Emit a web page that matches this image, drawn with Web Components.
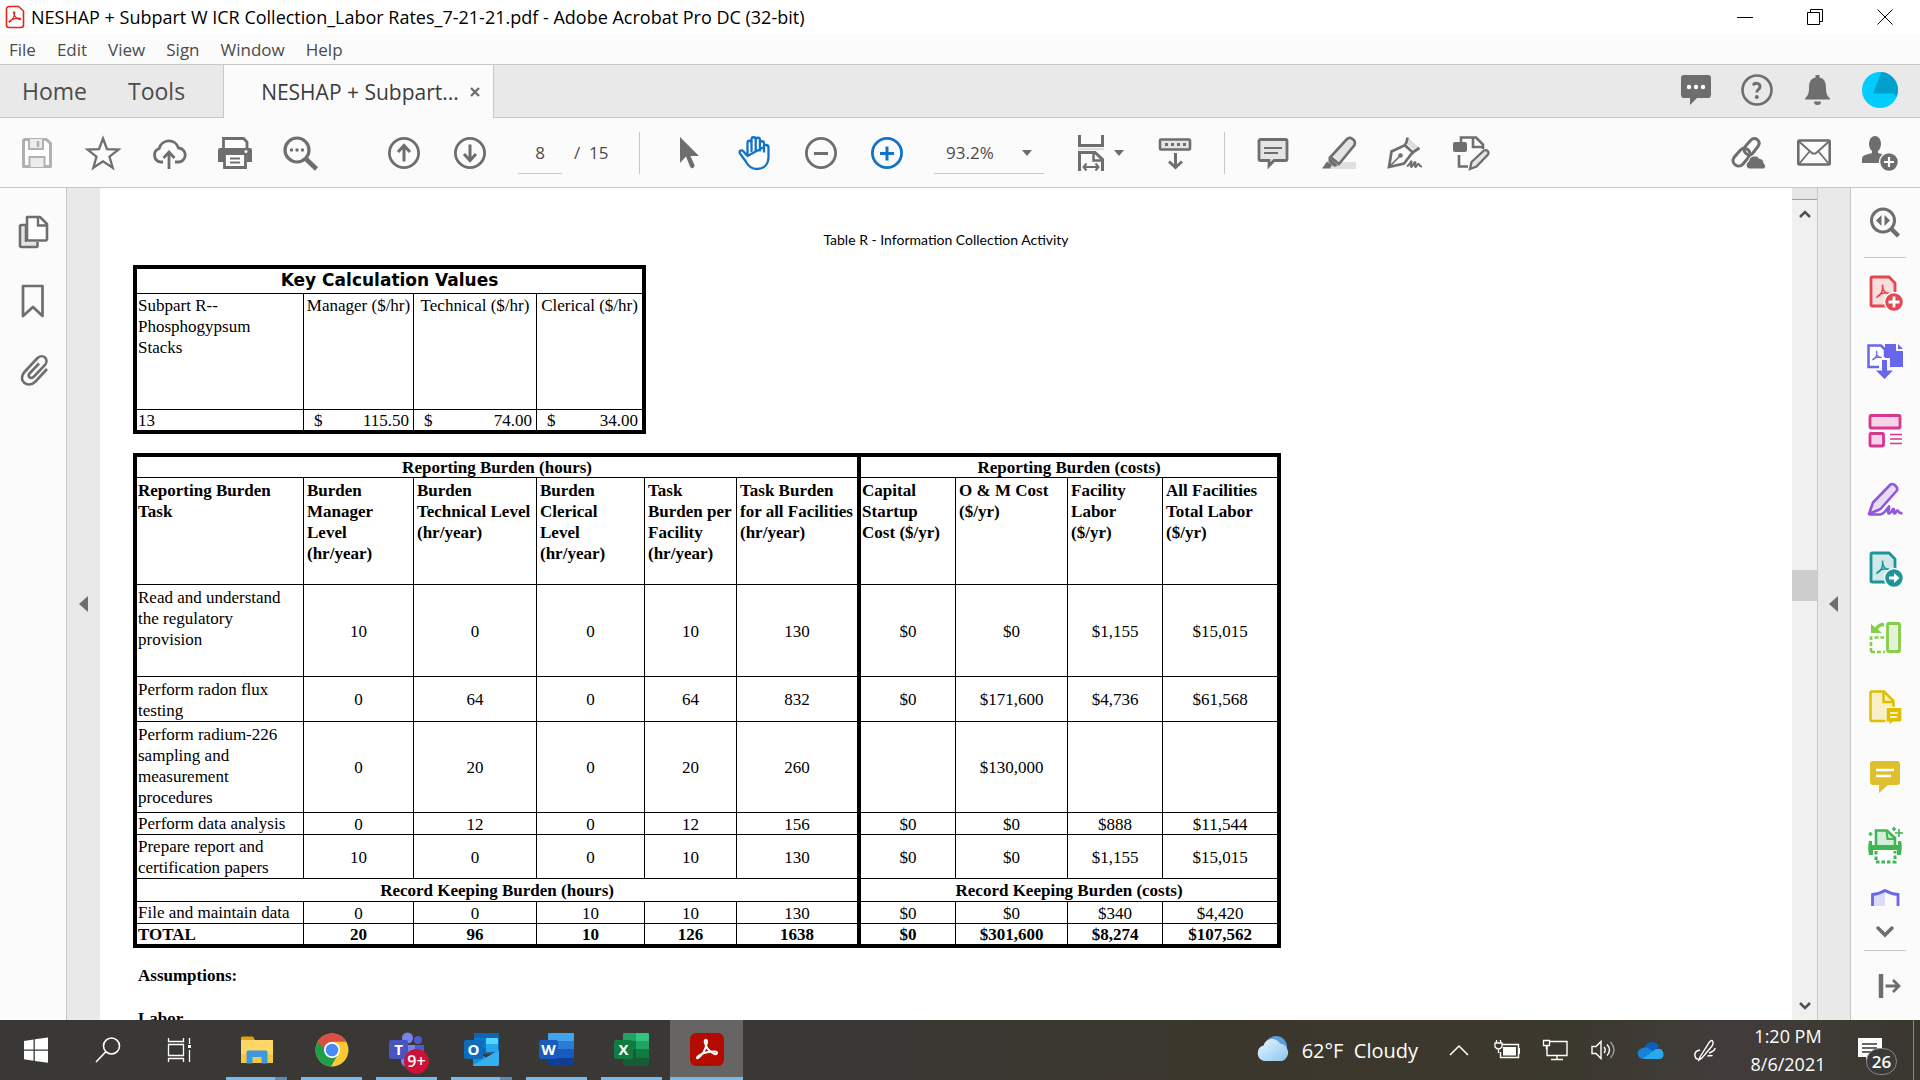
<!DOCTYPE html>
<html lang="en">
<head>
<meta charset="utf-8">
<title>NESHAP + Subpart W ICR Collection_Labor Rates_7-21-21.pdf - Adobe Acrobat Pro DC (32-bit)</title>
<style>
    html, body {
        margin: 0;
        height: 100%;
        overflow: hidden;
    }
    body {
        font-family: "Open Sans", "Noto Sans", sans-serif;
        font-size: 17px;
        color: #4b4b4b;
    }
</style>
</head>
<body>
<acrobat-app></acrobat-app>

<script>
/** Icons, all on a 36x36 grid unless a viewBox is given */
const icons = {
    pdfFile: { box: "0 0 20 24", svg: `<path d="M4 1.500h9.500l5 4.500v14a2.500 2.500 0 0 1-2.500 2.500H4A2.500 2.500 0 0 1 1.500 20V4A2.500 2.500 0 0 1 4 1.500z" fill="#fff" stroke="#e2231a" stroke-width="1.600"/><path d="M4.500 17c2-1 4.500-5 5.200-9 .2-1.500-1.500-1.500-1 .3.800 3 3.300 5.200 5.800 6.200 1.500.3 1.500-1.300-.2-1.400-3 0-6.500.8-9 2.400-1.500 1-1.500 2-.8 1.500z" fill="none" stroke="#e2231a" stroke-width="1.200"/>` },
    minimize: { box: "0 0 16 16", svg: `<path d="M0 8.500h16" stroke="#000"/>` },
    restore: { box: "0 0 16 16", svg: `<path d="M.5 3.500h12v12H.5zM3.500 3.500V.5h12v12h-3" fill="none" stroke="#000"/>` },
    close: { box: "0 0 16 16", svg: `<path d="M.5.5l15 15M15.500.5l-15 15" stroke="#000"/>` },
    smallClose: { box: "0 0 10 10", svg: `<path d="M1 1l8 8M9 1L1 9" stroke="#6e6e6e" stroke-width="2.400"/>` },
    caret: { box: "0 0 10 6", svg: `<path d="M0 0h10L5 6z" fill="#6e6e6e"/>` },
    collapse: { box: "0 0 9 16", svg: `<path d="M9 0v16L0 8z" fill="#6e6e6e"/>` },
    up: { box: "0 0 12 10", svg: `<path d="M1 8l5-5 5 5" fill="none" stroke="#505050" stroke-width="2.500"/>` },
    down: { box: "0 0 12 10", svg: `<path d="M1 2l5 5 5-5" fill="none" stroke="#505050" stroke-width="2.500"/>` },

    chat: { svg: `<path d="M5 3h24a3 3 0 0 1 3 3v17a3 3 0 0 1-3 3H18l-7 7v-7H5a3 3 0 0 1-3-3V6a3 3 0 0 1 3-3z" fill="#6e6e6e"/><g fill="#fff"><circle cx="10" cy="15" r="2.200"/><circle cx="17" cy="15" r="2.200"/><circle cx="24" cy="15" r="2.200"/></g>` },
    help: { svg: `<circle cx="18" cy="18" r="14.500" fill="none" stroke="#6e6e6e" stroke-width="2.600"/><path d="M14.500 13.500c.5-3 6.500-3 6.500 1 0 3-3.200 3-3.200 6" fill="none" stroke="#6e6e6e" stroke-width="3"/><circle cx="17.800" cy="25" r="2" fill="#6e6e6e"/>` },
    bell: { svg: `<path d="M16.500 3h4v2.500c5 1 6.500 5 6.500 10 0 6 1 8 4 11v1H6v-1c3-3 4-5 4-11 0-5 1.500-9 6.500-10z" fill="#6e6e6e"/><path d="M15 29.500h7a3.500 3.500 0 0 1-7 0z" fill="#6e6e6e"/>` },
    avatar: { svg: `<circle cx="18" cy="18" r="18" fill="#00ccff"/><path d="M19.500 0A18 18 0 0 1 34.500 25L32 21.500H11z" fill="#00a0cc"/>` },

    save: { svg: `<path d="M5.500 4.500h22l4 4v23h-27v-26z" fill="#fff" stroke="#b1b1b1" stroke-width="3" stroke-linejoin="round"/><path d="M10 4v10h14V4" fill="#ececec" stroke="#b1b1b1" stroke-width="2"/><path d="M19 6v6" stroke="#b1b1b1" stroke-width="2.500"/><path d="M10.500 32V22h15v10" fill="#ececec" stroke="#b1b1b1" stroke-width="2"/>` },
    star: { svg: `<path d="M18 3.500l4 10.700 11.500.4-9 7.100 3.200 11L18 26.300l-9.700 6.400 3.200-11-9-7.100 11.500-.4z" fill="none" stroke="#6e6e6e" stroke-width="2.300"/>` },
    cloud: { svg: `<path d="M12 27H9.500a7 7 0 0 1-1.300-13.500 10 10 0 0 1 19.300-.5A7 7 0 0 1 27 27h-3" fill="none" stroke="#6e6e6e" stroke-width="2.800"/><path d="M18 34V17M12.500 23l5.500-6 5.500 6" fill="none" stroke="#6e6e6e" stroke-width="2.800"/>` },
    print: { svg: `<path d="M6.500 14V3.500h20L30 7v7" fill="#fff" stroke="#6e6e6e" stroke-width="2.800"/><path d="M3 13h30a2 2 0 0 1 2 2v12h-5v-6H7v6H1V15a2 2 0 0 1 2-2z" fill="#6e6e6e"/><circle cx="29" cy="16.500" r="1.500" fill="#fff"/><path d="M7.500 20v12.500h21V20" fill="#fff" stroke="#6e6e6e" stroke-width="2.800"/><path d="M13 23.500h10M13 27.500h10" stroke="#6e6e6e" stroke-width="1.800"/>` },
    find: { svg: `<circle cx="14" cy="15" r="12" fill="none" stroke="#6e6e6e" stroke-width="3.200"/><path d="M23 24l10.500 10" stroke="#6e6e6e" stroke-width="4.500"/><g fill="#6e6e6e"><circle cx="8.500" cy="15" r="1.700"/><circle cx="14" cy="15" r="1.700"/><circle cx="19.500" cy="15" r="1.700"/></g>` },
    prev: { svg: `<circle cx="18" cy="18" r="14.600" fill="none" stroke="#6e6e6e" stroke-width="2.800"/><path d="M18 26.500V11M12 17l6-6.500 6 6.500" fill="none" stroke="#6e6e6e" stroke-width="3"/>` },
    next: { svg: `<circle cx="18" cy="18" r="14.600" fill="none" stroke="#6e6e6e" stroke-width="2.800"/><path d="M18 9.500V25M12 19l6 6.500 6-6.500" fill="none" stroke="#6e6e6e" stroke-width="3"/>` },
    pointer: { svg: `<path d="M9 2v26l6-6.500 4 10q1 2.500 3 1.500t1.500-3L19.500 21H28z" fill="#6e6e6e"/>` },
    hand: { svg: `<path d="M10.500 21V8c0-3 4-3 4 0v8V4.500c0-3 4.200-3 4.200 0V16 5c0-3 4.200-3 4.200 0v11.500 M22.900 8.500c0-3 4.100-3 4.100 0v9 M27 12c0-3 4.500-2.500 4.500.5v9C31.500 29 27.500 34 20 34c-6 0-9-3-11.500-8L3 18.500c-1.500-3 1.500-4 3.500-2L10.500 21z" fill="#fff" stroke="#1473c8" stroke-width="2.300" stroke-linejoin="round"/>` },
    minus: { svg: `<circle cx="18" cy="18" r="14.600" fill="none" stroke="#6e6e6e" stroke-width="2.800"/><path d="M11 18.500h14" stroke="#6e6e6e" stroke-width="3"/>` },
    plus: { svg: `<circle cx="18" cy="18" r="14.600" fill="none" stroke="#1473c8" stroke-width="2.800"/><path d="M11 18.500h14M18 11.500v14" stroke="#1473c8" stroke-width="3"/>` },
    fit: { svg: `<path d="M6.500 0v10.500h23V0" fill="none" stroke="#6e6e6e" stroke-width="3"/><path d="M5 14h26" stroke="#ddd" stroke-width="2.500"/><path d="M6.500 36V17.500H22l7.500 7V36" fill="none" stroke="#6e6e6e" stroke-width="3"/><path d="M20.500 17v8.500h9" fill="none" stroke="#6e6e6e" stroke-width="2.500"/><path d="M12 32h12M13.500 28.500L10.500 32l3 3.500M22.500 28.500l3 3.500-3 3.500" fill="none" stroke="#6e6e6e" stroke-width="2"/>` },
    scrollMode: { svg: `<rect x="3" y="4.500" width="30" height="10" rx="1" fill="#e4e4e4" stroke="#6e6e6e" stroke-width="2.600"/><path d="M8 9.500h21" stroke="#6e6e6e" stroke-width="3" stroke-dasharray="3 3"/><path d="M18.500 18v15M12 26.500l6.500 6 6.500-6" fill="none" stroke="#6e6e6e" stroke-width="3"/>` },
    comment: { svg: `<path d="M5.500 4.500h25a1.500 1.500 0 0 1 1.500 1.500v18a1.500 1.500 0 0 1-1.500 1.500H19L14 31v-5.500H5.500A1.500 1.500 0 0 1 4 24V6a1.500 1.500 0 0 1 1.500-1.500z" fill="#e4e4e4" stroke="#6e6e6e" stroke-width="2.800"/><path d="M9 13h18M9 18h14" stroke="#6e6e6e" stroke-width="1.800"/>` },
    highlight: { svg: `<path d="M13 27h22v7H8z" fill="#e0e0e0"/><path d="M9.500 22L26 4c3-3 9.500 1 7.500 6L18 29z" fill="#e4e4e4" stroke="#6e6e6e" stroke-width="2.600"/><path d="M7.500 21.500l9.500 9-3.500 1.500-6-5zM6 26.500l5 3.500-2 3.500H1z" fill="#6e6e6e"/>` },
    sign: { svg: `<path d="M22 3l10 10-5 2-7-6z" fill="#ddd"/><path d="M20.500 2.500c-1 4 .5 3.500-3 8L4.500 16.500 2 32l15-3.500 8.500-11 7-4.500M17 9.500l10 9" fill="none" stroke="#6e6e6e" stroke-width="2.700"/><path d="M3 31l10-10" stroke="#6e6e6e" stroke-width="1.700"/><circle cx="13.500" cy="20.500" r="2.300" fill="#6e6e6e"/><path d="M20 31.500c3-2 4-6 4.500-5s-1.500 5.500 0 5.500 2-5 3.500-5-1 5 .5 5 1.500-3.500 3-3 .5 3 3.500 2.500" fill="none" stroke="#6e6e6e" stroke-width="2"/>` },
    editDoc: { svg: `<path d="M8 8V2.500h15l7 7V14" fill="none" stroke="#6e6e6e" stroke-width="2.600"/><path d="M20 3v9h10" fill="none" stroke="#6e6e6e" stroke-width="2.600"/><rect y="7" width="14" height="10" rx="2" fill="#6e6e6e"/><path d="M6 20v11.500h9" fill="none" stroke="#6e6e6e" stroke-width="2.600"/><path d="M17 34l1.500-7L31 15.500c3-1.500 5.500 1.500 4 4L23.500 31.500z" fill="#e4e4e4" stroke="#6e6e6e" stroke-width="2.300"/>` },
    link: { svg: `<g fill="none" stroke="#6e6e6e" stroke-width="3"><path d="M16 18.500c-3.500-3.500-2-6 0-8l5-5.500c4-4 10.500 1 7 6.500l-5 6.500c-2 2.500-5 2.500-7 .5"/><path d="M17 14c4 2.500 3.500 6 1 9l-5 6c-4 5-13 0-9-6.500l6-7c2-2.500 5-2.500 7-1.500"/></g><path d="M19 34a4 4 0 0 1-.5-7.500 6 6 0 0 1 11-3 5 5 0 0 1 4.500 5 3 3 0 0 1-.5 5.500z" fill="#6e6e6e" stroke="#fbfbfb" stroke-width="1"/>` },
    mail: { svg: `<rect x="2.300" y="5.500" width="31.400" height="24" rx="1" fill="none" stroke="#6e6e6e" stroke-width="2.600"/><path d="M3 6.500l13.500 12h3L33 6.500M3 29l10.500-12.500M33 29L22.500 16.500" fill="none" stroke="#6e6e6e" stroke-width="1.800"/>` },
    addUser: { svg: `<ellipse cx="13" cy="9" rx="6" ry="8" fill="#6e6e6e"/><path d="M10 14h6v4c4 1 8 2 8 5l-6 5H0v-3c0-5 3-5 10-7z" fill="#6e6e6e"/><circle cx="27" cy="27" r="9.500" fill="#6e6e6e" stroke="#fbfbfb" stroke-width="1.500"/><path d="M22 27h10M27 22v10" stroke="#fff" stroke-width="2.200"/>` },

    pages: { svg: `<path d="M10 28V11H5.500a1.500 1.500 0 0 0-1.500 1.500v19A1.500 1.500 0 0 0 5.500 33H20a1.500 1.500 0 0 0 1.500-1.500V28" fill="#e4e4e4" stroke="#6e6e6e" stroke-width="2.600"/><path d="M11 3h13l7 7v15a1.500 1.500 0 0 1-1.500 1.500H12.500A1.500 1.500 0 0 1 11 25V3z" fill="#fff" stroke="#6e6e6e" stroke-width="2.600" stroke-linejoin="round"/><path d="M22 3v8.500h9" fill="none" stroke="#6e6e6e" stroke-width="2.400"/>` },
    bookmark: { svg: `<path d="M7 3h19.500v30L17 24l-10 9z" fill="none" stroke="#6e6e6e" stroke-width="2.700" stroke-linejoin="round"/>` },
    clip: { svg: `<path d="M31 17L19.500 29.500c-8 8-18.500-1.500-11-9.500L21 6.500c6-6 12.500 1 8 6.500L18 24.500c-4 3.500-7-.5-4-3.500L23 11.500" fill="none" stroke="#6e6e6e" stroke-width="2.600"/>` },

    zoomTools: { svg: `<circle cx="16" cy="15.500" r="11.500" fill="none" stroke="#6e6e6e" stroke-width="3"/><path d="M24.500 24l7 7" stroke="#6e6e6e" stroke-width="4.500"/><path d="M14.500 10v11L9 15.500zM17.500 10v11l5.500-5.500z" fill="#6e6e6e"/>` },
    createPdf: { svg: `<path d="M5 2h17l6 6v23H5a1 1 0 0 1-1-1V3a1 1 0 0 1 1-1z" fill="#f9dede" stroke="#e34850" stroke-width="2.800"/><path d="M15.500 9.500c1 6-1.500 10.500-6 13 3-4 9-6 13-4-5 0-7-3.500-7-9z" fill="none" stroke="#e34850" stroke-width="1.500"/><circle cx="27" cy="27" r="9.500" fill="#e34850" stroke="#fbfbfb" stroke-width="1.500"/><path d="M21.500 27h11M27 21.500v11" stroke="#fff" stroke-width="2.800"/>` },
    combine: { svg: `<path d="M12 23H1.500V1.500H14l4 4V13" fill="#fff" stroke="#6767ec" stroke-width="2.500"/><path d="M18 0h11v7h7v16H23v-9h-5z" fill="#6767ec"/><path d="M31 0l5 5h-5z" fill="#6767ec"/><path d="M9.500 7c1 4-.5 7-4 9 2-2.500 6-3.500 9-2.500-3 0-5-2.500-5-6.500z" fill="none" stroke="#6767ec" stroke-width="1.300"/><path d="M15 16h5v10.500h6L17.500 35 9 26.500h6z" fill="#6767ec"/>` },
    organize: { svg: `<g fill="#f7d3e8" stroke="#d83790" stroke-width="2.800"><rect x="3" y="2.500" width="30" height="12.500" rx="1"/><rect x="3" y="20.500" width="13.500" height="12.500" rx="1"/></g><path d="M23 21.500h12M23 26h12M23 30.500h12" stroke="#d83790" stroke-width="1.700"/>` },
    fillSign: { svg: `<path d="M2 32L6 20.500 23 3c3-3 9 2.500 6.500 6L13.500 27 2 32z" fill="#e6dcf5" stroke="#9256d9" stroke-width="2.600" stroke-linejoin="round"/><path d="M2 32.500h11c4 0 8-7 9-8 1 1-2.500 7 0 7s3-5 4.500-4.500-1 4.500 1 4.500 1.500-3.500 3-3 1 3.500 5 2.500" fill="none" stroke="#9256d9" stroke-width="2.600"/>` },
    exportPdf: { svg: `<path d="M5 2h17l6 6v23H5a1 1 0 0 1-1-1V3a1 1 0 0 1 1-1z" fill="#d0e8e8" stroke="#1b959a" stroke-width="2.800"/><path d="M15.500 9.500c1 6-1.500 10.500-6 13 3-4 9-6 13-4-5 0-7-3.500-7-9z" fill="none" stroke="#1b959a" stroke-width="1.500"/><circle cx="27" cy="27" r="9.500" fill="#1b959a" stroke="#fbfbfb" stroke-width="1.500"/><path d="M22 25.500h5V22l5.500 5-5.500 5v-3.500h-5z" fill="#fff"/>` },
    compress: { svg: `<rect x="20.500" y="3.500" width="12" height="28" rx="1" fill="#e4f3d8" stroke="#84cf46" stroke-width="2.800"/><path d="M4 32V17.500h13M4 32h14" fill="none" stroke="#84cf46" stroke-width="2.600" stroke-dasharray="4 2"/><path d="M17 4.500c-5 0-6.500 2-8 5" fill="none" stroke="#84cf46" stroke-width="3.500"/><path d="M4 4v9h11z" fill="#84cf46"/>` },
    requestComments: { svg: `<path d="M4.500 2.500H17l9.500 9.500v20h-22a1 1 0 0 1-1-1v-27.500a1 1 0 0 1 1-1z" fill="#f6efc8" stroke="#dfbf00" stroke-width="2.500"/><path d="M16.500 2.500V13h10" fill="none" stroke="#dfbf00" stroke-width="2.500"/><path d="M19 18.500h14a2 2 0 0 1 2 2V31a2 2 0 0 1-2 2h-7l-4 4v-4h-3z" fill="#dfbf00" stroke="#fbfbfb" stroke-width="1.200"/><path d="M23 24h8M23 28h7" stroke="#fff" stroke-width="1.500"/>` },
    commentTool: { svg: `<path d="M6 3h24a3 3 0 0 1 3 3v18a3 3 0 0 1-3 3h-9l-9 8v-8H6a3 3 0 0 1-3-3V6a3 3 0 0 1 3-3z" fill="#e0bf2d"/><path d="M9 12h18M9 18h15" stroke="#fff" stroke-width="2.500"/>` },
    scan: { svg: `<path d="M9 19V3.500h11l8 7.500V19" fill="#d5eedb" stroke="#3fb554" stroke-width="2.600"/><path d="M19.500 4l1 8h8" fill="none" stroke="#3fb554" stroke-width="2"/><path d="M2 14h3v4h26v-4h3q1.500 4 0 14h-4v-5H6v5H2q-1.500-8 0-14z" fill="#3fb554"/><path d="M9 24v11h19V24" fill="#fff" stroke="#3fb554" stroke-width="3" stroke-dasharray="3.500 2"/><path d="M32 2v8M28 6h8M27 0v4M25 2h4M3.500 5v4M1.500 7h4" stroke="#3fb554" stroke-width="1.600"/>` },
    protect: { box: "0 0 36 18", svg: `<path d="M5 18V7c6 0 9-1 13-4v15z" fill="#dcdcf8"/><path d="M5.500 18V6.500C11 6 14 5 18 2.500 22 5 25 6 31 6.500V18" fill="none" stroke="#6767ec" stroke-width="2.800"/>` },
    more: { box: "0 0 18 12", svg: `<path d="M2 2l7 7 7-7" fill="none" stroke="#6e6e6e" stroke-width="3.500" stroke-linecap="round"/>` },
    exit: { svg: `<path d="M14 6v24" stroke="#6e6e6e" stroke-width="4.500"/><path d="M18.500 18H32M26 12l6 6-6 6" fill="none" stroke="#6e6e6e" stroke-width="2.800"/>` },

    windows: { svg: `<path d="M6 9l9.500-1.500v10H6zM16.800 7.300L30 5.500v12H16.800zM6 18.700h9.500v10L6 27.200zM16.800 18.700H30v12l-13.200-1.800z" fill="#fff"/>` },
    winSearch: { svg: `<circle cx="21.500" cy="14" r="8" fill="none" stroke="#fff" stroke-width="1.600"/><path d="M15.800 19.800L6 30" stroke="#fff" stroke-width="1.600"/>` },
    taskView: { svg: `<path d="M6.500 6v3.500h15V6M6.500 12.500h15v11h-15zM6.500 30v-3.500h15V30M27.500 6v6M27.500 18v12" fill="none" stroke="#fff" stroke-width="1.300"/><path d="M26 13h3v3h-3z" fill="#fff"/>` },
    explorer: { svg: `<path d="M2 6a1.500 1.500 0 0 1 1.500-1.500H14L16 8H2z" fill="#e3a008"/><path d="M2 8h32v23H2z" fill="#ffd766"/><path d="M2 22h32v9H2z" fill="#f9c842"/><path d="M7.500 31.500V20a1.500 1.500 0 0 1 1.500-1.500h18a1.500 1.500 0 0 1 1.500 1.500v11.500h-6V25h-9v6.500z" fill="#3b99e0"/>` },
    chrome: { svg: `<circle cx="18" cy="18" r="16.500" fill="#fcc934"/><path d="M18 18L3.700 9.700A16.500 16.500 0 0 0 17 34.500l8-14z" fill="#1e9e4a"/><path d="M18 1.500a16.500 16.500 0 0 1 14.300 8.300H18a8.200 8.200 0 0 0-8 6.500L3.700 9.800A16.500 16.500 0 0 1 18 1.500z" fill="#d94f43"/><circle cx="18" cy="18" r="8" fill="#fff"/><circle cx="18" cy="18" r="6.300" fill="#4a8af4"/>` },
    teams: { svg: `<circle cx="18.500" cy="6" r="5.500" fill="#7b83eb"/><circle cx="29" cy="8" r="4" fill="#5059c9"/><path d="M12 13h14v13a7 7 0 0 1-14 4z" fill="#7b83eb"/><path d="M26 13h9v10a5 5 0 0 1-9 2z" fill="#5059c9"/><rect y="8" width="19" height="19" rx="2" fill="#4b53bc"/><text x="9.500" y="23" text-anchor="middle" font-size="15" font-weight="700" fill="#fff">T</text>` },
    outlook: { svg: `<path d="M10 1h24a1 1 0 0 1 1 1v20H10z" fill="#1066b5"/><path d="M10 6h12v10H10z" fill="#0a79c9"/><path d="M22 6h12v6H22z" fill="#50d9ff"/><path d="M22 12h12v8H22z" fill="#28a8ea"/><path d="M9 18l14 8 12-8v14a2 2 0 0 1-2 2H9z" fill="#1490df"/><path d="M9 33l26-15v14a2 2 0 0 1-2 2H10z" fill="#35b0ee"/><rect x="0" y="8" width="19" height="19" rx="2" fill="#0f6cbd"/><text x="9.500" y="23" text-anchor="middle" font-size="15" font-weight="700" fill="#fff">O</text>` },
    word: { svg: `<path d="M9 9V2a1 1 0 0 1 1-1h24a1 1 0 0 1 1 1v7z" fill="#41a5ee"/><path d="M9 9h26v8.500H9z" fill="#2b7cd3"/><path d="M9 17.500h26V26H9z" fill="#185abd"/><path d="M9 26h26v7a1 1 0 0 1-1 1H10a1 1 0 0 1-1-1z" fill="#103f91"/><rect x="0" y="8" width="19" height="19" rx="2" fill="#185abd"/><text x="9.500" y="23" text-anchor="middle" font-size="15" font-weight="700" fill="#fff">W</text>` },
    excel: { svg: `<path d="M9 9V2a1 1 0 0 1 1-1h12v8z" fill="#21a366"/><path d="M22 1h12a1 1 0 0 1 1 1v7H22z" fill="#33c481"/><path d="M9 9h13v8.500H9z" fill="#107c41"/><path d="M22 9h13v8.500H22z" fill="#21a366"/><path d="M9 17.500h13V26H9z" fill="#185c37"/><path d="M22 17.500h13V26H22z" fill="#107c41"/><path d="M9 26h26v7a1 1 0 0 1-1 1H10a1 1 0 0 1-1-1z" fill="#185c37"/><rect x="0" y="8" width="19" height="19" rx="2" fill="#107c41"/><text x="9.500" y="23" text-anchor="middle" font-size="15" font-weight="700" fill="#fff">X</text>` },
    acrobat: { svg: `<rect x="1" y="1" width="34" height="33" rx="6" fill="#b30b00"/><path d="M9 26c4-2 8-9 9-16 .3-3-3-3-2.200.5 1.200 5 5.200 9.500 10 11.500 3 .8 3-2.500-.3-2.500-5 0-11 1-15.500 4-2.500 1.500-2.500 3.500-1 2.500z" fill="none" stroke="#fff" stroke-width="2"/>` },
    weather: { svg: `<defs><linearGradient id="w" x1="0" y1="0" x2="1" y2="1"><stop offset="0" stop-color="#e9f7ff"/><stop offset="1" stop-color="#8cc4ee"/></linearGradient></defs><circle cx="22" cy="15" r="11" fill="#5b9de0"/><path d="M10 29a8 8 0 0 1-.5-15.500 9 9 0 0 1 16.500-2A9 9 0 0 1 28 29z" fill="url(#w)"/>` },
    trayUp: { box: "0 0 24 24", svg: `<path d="M3 17l9-9 9 9" fill="none" stroke="#fff" stroke-width="1.500"/>` },
    battery: { box: "0 0 26 24", svg: `<path d="M8 6.500h16.500v13h-18V14" fill="none" stroke="#fff" stroke-width="1.400"/><path d="M9 9h13v8.500H9z" fill="#fff"/><path d="M24 10h2v6h-2z" fill="#fff"/><path d="M1 5h7v4q-3.500 4-7 0zM2.500 2v3M6.500 2v3M4.500 11v4" fill="#3b382f" stroke="#fff" stroke-width="1.300"/>` },
    network: { box: "0 0 26 24", svg: `<path d="M5 3.500h20v14H5zM15 17.500v4M9 21.500h12" fill="none" stroke="#fff" stroke-width="1.400"/><path d="M1.500 2.500h6v5h-6zM4.500 7.500v4" fill="#3b382f" stroke="#fff" stroke-width="1.300"/>` },
    sound: { box: "0 0 26 24", svg: `<path d="M2 8.500h4l5-5v17l-5-5H2z" fill="none" stroke="#fff" stroke-width="1.400"/><path d="M14 9q2.500 3 0 6M17 6.500q5 5.500 0 11" fill="none" stroke="#fff" stroke-width="1.400"/><path d="M20.500 4q7 8 0 16" fill="none" stroke="#999" stroke-width="1.400"/>` },
    onedrive: { box: "0 0 26 24", svg: `<path d="M7 9a7.500 7.500 0 0 1 14-.5L15 15H3z" fill="#0f5fb8"/><path d="M5.500 21A5.500 5.500 0 0 1 5 10q3-1.500 6 .5L24 19l-2 2z" fill="#1683d8"/><path d="M5 20.500L17 11.500q8-3 8.500 5a4.500 4.500 0 0 1-4 4.500H6z" fill="#29a8ea"/>` },
    pen: { box: "0 0 26 24", svg: `<path d="M8 19L17.500 4q2.500-3 3.500 0 .5 2-1 4L10 20l-3 2zM8 12q-6 1-5 6t7 2M17 15q6-2 6-5M15.500 18q4-1 5 0" fill="none" stroke="#fff" stroke-width="1.400"/>` },
    notify: { box: "0 0 26 26", svg: `<path d="M1 1h24v19h-11l-5 5v-5H1z" fill="#fff"/><path d="M5 7h15M5 11h15M5 15h10" stroke="#3a3735" stroke-width="1.400"/>` }
};

class AppIcon extends HTMLElement {
    static observedAttributes = ["name"];

    constructor() {
        super();
        this.attachShadow({ mode: "open" });
    }

    attributeChangedCallback(attr, oldValue, name) {
        const icon = icons[name];
        const box = icon.box || "0 0 36 36";
        const [, , width, height] = box.split(" ");
        this.shadowRoot.innerHTML = `
            <style>
                :host { display: inline-flex; flex: none; }
                svg { display: block; overflow: visible; font-family: "Open Sans", sans-serif; }
            </style>
            <svg viewBox="${box}" width="${width}" height="${height}" aria-hidden="true">${icon.svg}</svg>
        `;
    }
}
customElements.define("app-icon", AppIcon);

/** Attach a shadow root with the given markup */
function defineView(tag, html) {
    const template = document.createElement("template");
    template.innerHTML = html;
    customElements.define(tag, class extends HTMLElement {
        constructor() {
            super();
            this.attachShadow({ mode: "open" });
            this.shadowRoot.append(template.content.cloneNode(true));
        }
    });
}

/** Icon button. Size comes from --w and --h of the parent */
class IconButton extends HTMLElement {
    constructor() {
        super();
        this.attachShadow({ mode: "open" });
        this.shadowRoot.innerHTML = `
            <style>
                :host { display: block; flex: none; }
                button {
                    display: flex;
                    align-items: center;
                    justify-content: center;
                    gap: 5px;
                    width: var(--w, 66px);
                    height: var(--h, 66px);
                    padding: 0;
                    border: 0;
                    background: none;
                    font: inherit;
                    color: inherit;
                }
            </style>
            <button><slot></slot></button>
        `;
    }

    connectedCallback() {
        const button = this.shadowRoot.querySelector("button");
        button.setAttribute("aria-label", this.getAttribute("label"));
        const icon = document.createElement("app-icon");
        icon.setAttribute("name", this.getAttribute("icon"));
        button.prepend(icon);
    }
}
customElements.define("icon-button", IconButton);

defineView("title-bar", `
    <style>
        :host {
            display: flex;
            align-items: center;
            height: 34px;
            padding-left: 5px;
            background: #fff;
            color: #000;
            font-size: 18px;
        }
        .title { flex: 1; margin-left: 6px; white-space: nowrap; }
        .controls { display: flex; --w: 70px; --h: 34px; }
    </style>
    <app-icon name="pdfFile"></app-icon>
    <span class="title">NESHAP + Subpart W ICR Collection_Labor Rates_7-21-21.pdf - Adobe Acrobat Pro DC (32-bit)</span>
    <div class="controls">
        <icon-button icon="minimize" label="Minimize"></icon-button>
        <icon-button icon="restore" label="Restore"></icon-button>
        <icon-button icon="close" label="Close"></icon-button>
    </div>
`);

defineView("menu-bar", `
    <style>
        :host { display: block; background: #fbfbfb; border-bottom: 1px solid #c8c8c8; }
        nav { display: flex; gap: 21px; height: 30px; align-items: center; padding-left: 9px; }
        button { border: 0; padding: 0; background: none; font: inherit; color: inherit; }
    </style>
    <nav>
        <button>File</button><button>Edit</button><button>View</button>
        <button>Sign</button><button>Window</button><button>Help</button>
    </nav>
`);

defineView("tab-strip", `
    <style>
        :host {
            display: flex;
            height: 53px;
            background: #e9e9e9;
            box-shadow: inset 0 -1px #c8c8c8;
        }
        button { border: 0; padding: 0; background: none; font: inherit; color: inherit; }
        .fixed { display: flex; gap: 41px; padding: 0 38px 2px 22px; font-size: 23px; }
        .tab {
            display: flex;
            align-items: center;
            gap: 11px;
            padding: 0 13px 0 37px;
            border: 1px solid #c8c8c8;
            border-width: 0 1px;
            background: #fbfbfb;
            font-size: 21px;
            color: #3c3c3c;
            --w: 10px;
        }
        .account { display: flex; margin-left: auto; padding-right: 7px; }
        .account icon-button { --h: 50px; --w: 60px; }
        .account icon-button:last-child { --w: 66px; }
    </style>
    <div class="fixed"><button>Home</button><button>Tools</button></div>
    <div class="tab">
        <button>NESHAP + Subpart...</button>
        <icon-button icon="smallClose" label="Close tab"></icon-button>
    </div>
    <div class="account">
        <icon-button icon="chat" label="Feedback"></icon-button>
        <icon-button icon="help" label="Help"></icon-button>
        <icon-button icon="bell" label="Notifications"></icon-button>
        <icon-button icon="avatar" label="Profile"></icon-button>
    </div>
`);

defineView("tool-bar", `
    <style>
        :host {
            display: flex;
            align-items: center;
            height: 69px;
            padding: 0 7px 0 4px;
            background: #fbfbfb;
            border-bottom: 1px solid #c8c8c8;
        }
        .group { display: flex; }
        .nav { margin-left: 37px; }
        .page { display: flex; align-items: center; gap: 12px; margin-left: 15px; width: 121px; }
        input, select {
            box-sizing: border-box;
            height: 42px;
            border: 0;
            border-bottom: 1px solid #c8c8c8;
            border-radius: 0;
            background: none;
            font: inherit;
            color: inherit;
        }
        input { width: 44px; padding: 0; text-align: center; }
        .total { white-space: pre; }
        hr { width: 1px; height: 42px; margin: 0; border: 0; background: #c8c8c8; }
        .pointer { margin-left: 16px; }
        .zoom { display: grid; align-items: center; width: 110px; margin-left: 14px; }
        .zoom > * { grid-area: 1 / 1; }
        .zoom app-icon { justify-self: end; margin-right: 12px; pointer-events: none; }
        select { width: 100%; appearance: none; padding: 0 12px; }
        .view { margin: 0 16px 0 26px; }
        .view icon-button:first-child { --w: 56px; margin-right: 16px; }
        .markup { margin-left: 15px; }
        .share { margin-left: auto; }
    </style>
    <div class="group">
        <icon-button icon="save" label="Save"></icon-button>
        <icon-button icon="star" label="Star"></icon-button>
        <icon-button icon="cloud" label="Upload"></icon-button>
        <icon-button icon="print" label="Print"></icon-button>
        <icon-button icon="find" label="Find"></icon-button>
    </div>
    <div class="group nav">
        <icon-button icon="prev" label="Previous page"></icon-button>
        <icon-button icon="next" label="Next page"></icon-button>
    </div>
    <div class="page">
        <input type="text" value="8" aria-label="Page number">
        <span class="total">/  15</span>
    </div>
    <hr>
    <div class="group pointer">
        <icon-button icon="pointer" label="Select"></icon-button>
        <icon-button icon="hand" label="Hand"></icon-button>
        <icon-button icon="minus" label="Zoom out"></icon-button>
        <icon-button icon="plus" label="Zoom in"></icon-button>
    </div>
    <div class="zoom">
        <select aria-label="Zoom level"><option>93.2%</option></select>
        <app-icon name="caret"></app-icon>
    </div>
    <div class="group view">
        <icon-button icon="fit" label="Fit width"><app-icon name="caret"></app-icon></icon-button>
        <icon-button icon="scrollMode" label="Scrolling"></icon-button>
    </div>
    <hr>
    <div class="group markup">
        <icon-button icon="comment" label="Comment"></icon-button>
        <icon-button icon="highlight" label="Highlight"></icon-button>
        <icon-button icon="sign" label="Sign"></icon-button>
        <icon-button icon="editDoc" label="Edit"></icon-button>
    </div>
    <div class="group share">
        <icon-button icon="link" label="Share link"></icon-button>
        <icon-button icon="mail" label="Send by email"></icon-button>
        <icon-button icon="addUser" label="Add people"></icon-button>
    </div>
`);

/** Tables of the document */
const tableStyle = `
    :host { display: block; }
    table {
        table-layout: fixed;
        box-sizing: border-box;
        border: 4px solid #000;
        border-collapse: separate;
        border-spacing: 0;
        line-height: 18px;
        white-space: nowrap;
    }
    th, td {
        box-sizing: border-box;
        padding: 2px 0 0;
        border: 0 solid #000;
        border-width: 0 1px 1px 0;
        text-align: center;
        font-weight: 400;
    }
    tr:last-child > * { border-bottom-width: 0; }
    tr > :last-child { border-right-width: 0; }
    .label { padding-left: 1px; text-align: left; vertical-align: top; }
    .text { line-height: 21px; }
`;

defineView("key-values", `
    <style>
        ${tableStyle}
        table { width: 513px; }
        .name { padding: 0 0 2px; font: 700 17px/22px "DejaVu Sans", "Liberation Sans", sans-serif; }
        .heads { height: 116px; }
        .heads > * { padding-top: 1px; vertical-align: top; line-height: 21px; }
        .money { display: flex; justify-content: space-between; padding: 0 4px 0 10px; }
    </style>
    <table>
        <colgroup><col style="width:167px"><col style="width:110px"><col style="width:123px"><col style="width:105px"></colgroup>
        <tr style="height:25px"><th class="name" colspan="4">Key Calculation Values</th></tr>
        <tr class="heads">
            <th class="label">Subpart R--<br>Phosphogypsum<br>Stacks</th>
            <th>Manager ($/hr)</th><th>Technical ($/hr)</th><th>Clerical ($/hr)</th>
        </tr>
        <tr style="height:20px">
            <td class="label">13</td>
            <td><div class="money"><span>$</span><span>115.50</span></div></td>
            <td><div class="money"><span>$</span><span>74.00</span></div></td>
            <td><div class="money"><span>$</span><span>34.00</span></div></td>
        </tr>
    </table>
`);

const columns = [167, 110, 123, 108, 92, 124, 95, 112, 95, 114];
const heads = [
    "Reporting Burden<br>Task", "Burden<br>Manager<br>Level<br>(hr/year)", "Burden<br>Technical Level<br>(hr/year)",
    "Burden<br>Clerical<br>Level<br>(hr/year)", "Task<br>Burden per<br>Facility<br>(hr/year)",
    "Task Burden<br>for all Facilities<br>(hr/year)", "Capital<br>Startup<br>Cost ($/yr)", "O &amp; M Cost<br>($/yr)",
    "Facility<br>Labor<br>($/yr)", "All Facilities<br>Total Labor<br>($/yr)"
];
const reporting = [
    { height: 92, kind: "text", cells: ["Read and understand<br>the regulatory<br>provision", "10", "0", "0", "10", "130", "$0", "$0", "$1,155", "$15,015"] },
    { height: 45, kind: "text", cells: ["Perform radon flux<br>testing", "0", "64", "0", "64", "832", "$0", "$171,600", "$4,736", "$61,568"] },
    { height: 91, kind: "text", cells: ["Perform radium-226<br>sampling and<br>measurement<br>procedures", "0", "20", "0", "20", "260", "", "$130,000", "", ""] },
    { height: 22, cells: ["Perform data analysis", "0", "12", "0", "12", "156", "$0", "$0", "$888", "$11,544"] },
    { height: 44, kind: "text tight", cells: ["Prepare report and<br>certification papers", "10", "0", "0", "10", "130", "$0", "$0", "$1,155", "$15,015"] }
];
const keeping = [
    { height: 22, cells: ["File and maintain data", "0", "0", "10", "10", "130", "$0", "$0", "$340", "$4,420"] },
    { height: 20, bold: true, cells: ["TOTAL", "20", "96", "10", "126", "1638", "$0", "$301,600", "$8,274", "$107,562"] }
];

class BurdenTable extends HTMLElement {
    constructor() {
        super();
        this.attachShadow({ mode: "open" });
    }

    connectedCallback() {
        this.shadowRoot.innerHTML = `
            <style>
                ${tableStyle}
                table { width: 1148px; }
                .bold > * { font-weight: 700; }
                .heads > * { padding-left: 3px; text-align: left; vertical-align: top; line-height: 21px; }
                .heads > :first-child, .heads > :nth-child(7) { padding-left: 1px; }
                .section > :first-child, tr > :nth-child(6) { border-right-width: 4px; }
                .tight { padding-top: 1px; }
            </style>
            <table>
                <colgroup>${columns.map((width) => `<col style="width:${width}px">`).join("")}</colgroup>
                ${this.section("Reporting Burden", 21)}
                <tr class="heads bold" style="height:107px">${heads.map((head) => `<th>${head}</th>`).join("")}</tr>
                ${reporting.map(this.row).join("")}
                ${this.section("Record Keeping Burden", 23)}
                ${keeping.map(this.row).join("")}
            </table>
        `;
    }

    section(name, height) {
        return `<tr class="section bold" style="height:${height}px"><th colspan="6">${name} (hours)</th><th colspan="4">${name} (costs)</th></tr>`;
    }

    row({ height, cells, kind = "", bold }) {
        const [label, ...values] = cells;
        return `<tr class="${bold ? "bold" : ""}" style="height:${height}px">
            <th class="label ${kind}">${label}</th>
            ${values.map((value) => `<td>${value}</td>`).join("")}
        </tr>`;
    }
}
customElements.define("burden-table", BurdenTable);

defineView("pdf-page", `
    <style>
        :host {
            display: block;
            flex: 1;
            min-width: 0;
            overflow: hidden;
            background: #fff;
            color: #000;
            font: 17px/22px "Liberation Serif", serif;
        }
        .caption { margin: 41px 0 14px; text-align: center; font: 14px/22px Lato, sans-serif; }
        .body { padding-left: 33px; }
        burden-table { margin: 19px 0 17px; }
        h3 { margin: 0 0 21px 5px; font-size: 17px; }
    </style>
    <p class="caption">Table R - Information Collection Activity</p>
    <div class="body">
        <key-values></key-values>
        <burden-table></burden-table>
        <h3>Assumptions:</h3>
        <h3>Labor</h3>
    </div>
`);

defineView("scroll-rail", `
    <style>
        :host {
            display: flex;
            flex-direction: column;
            align-items: center;
            width: 25px;
            background: #f0f0f0;
            border-right: 1px solid #c8c8c8;
        }
        .split { width: 100%; height: 11px; background: #e6e6e6; border-bottom: 1px solid #a0a0a0; }
        .track { display: flex; flex-direction: column; flex: 1; width: 100%; }
        .before { flex: 344; }
        .thumb { height: 31px; background: #cdcdcd; }
        .after { flex: 394; }
        icon-button { --w: 24px; --h: 28px; }
    </style>
    <div class="split"></div>
    <icon-button icon="up" label="Scroll up"></icon-button>
    <div class="track"><div class="before"></div><div class="thumb"></div><div class="after"></div></div>
    <icon-button icon="down" label="Scroll down"></icon-button>
`);

defineView("nav-rail", `
    <style>
        :host { display: flex; }
        .icons { width: 66px; padding-top: 9px; background: #fbfbfb; border-right: 1px solid #c8c8c8; --h: 69px; --w: 68px; }
        .gutter { display: flex; align-items: center; width: 33px; background: #e9e9e9; --w: 33px; }
    </style>
    <div class="icons">
        <icon-button icon="pages" label="Page thumbnails"></icon-button>
        <icon-button icon="bookmark" label="Bookmarks"></icon-button>
        <icon-button icon="clip" label="Attachments"></icon-button>
    </div>
    <div class="gutter"><icon-button icon="collapse" label="Show pane"></icon-button></div>
`);

defineView("tools-rail", `
    <style>
        :host { display: flex; }
        .gutter { display: flex; align-items: center; width: 32px; background: #e9e9e9; --w: 31px; }
        .icons {
            display: flex;
            flex-direction: column;
            align-items: center;
            width: 68px;
            padding-right: 1px;
            background: #fbfbfb;
            border-left: 1px solid #c8c8c8;
            --w: 68px;
            --h: 69px;
        }
        hr { width: 42px; height: 1px; margin: 0; border: 0; background: #c8c8c8; }
        .list { flex: 1; min-height: 0; overflow: hidden; }
        .protect { --h: 35px; }
        .more { --h: 36px; }
    </style>
    <div class="gutter"><icon-button icon="collapse" label="Hide pane"></icon-button></div>
    <div class="icons">
        <icon-button icon="zoomTools" label="Search tools"></icon-button>
        <hr>
        <div class="list">
            <icon-button icon="createPdf" label="Create PDF"></icon-button>
            <icon-button icon="combine" label="Combine files"></icon-button>
            <icon-button icon="organize" label="Organize pages"></icon-button>
            <icon-button icon="fillSign" label="Fill and sign"></icon-button>
            <icon-button icon="exportPdf" label="Export PDF"></icon-button>
            <icon-button icon="compress" label="Compress PDF"></icon-button>
            <icon-button icon="requestComments" label="Send for comments"></icon-button>
            <icon-button icon="commentTool" label="Comment"></icon-button>
            <icon-button icon="scan" label="Scan and OCR"></icon-button>
            <icon-button class="protect" icon="protect" label="Protect"></icon-button>
        </div>
        <icon-button class="more" icon="more" label="More tools"></icon-button>
        <hr>
        <icon-button icon="exit" label="Collapse"></icon-button>
    </div>
`);

defineView("task-bar", `
    <style>
        :host {
            display: flex;
            height: 60px;
            background: linear-gradient(90deg, #393836, #3a3835 45%, #3b372c 65%, #3b382e 82%, #423d3b 90%, #3a372f);
            color: #fff;
            --h: 60px;
        }
        .system, .apps, .tray { display: flex; }
        .system { --w: 72px; }
        .apps { flex: 1; padding-left: 4px; gap: 2px; --w: 73px; }
        .app { position: relative; display: grid; justify-items: center; }
        .app::after { content: ""; grid-area: 1 / 1; align-self: end; width: 61px; height: 3px; background: #76b9ed; }
        .app.more::after { background: linear-gradient(90deg, #76b9ed 49px, #5a8bb0 49px); }
        .app.active { background: #666564; }
        .app.active::after { width: 100%; }
        .app > icon-button { grid-area: 1 / 1; }
        .badge {
            position: absolute;
            left: 34px;
            top: 29px;
            width: 25px;
            height: 25px;
            border-radius: 50%;
            background: #cc1235;
            font-size: 16px;
            font-weight: 600;
            line-height: 25px;
            text-align: center;
        }
        .tray { align-items: center; --w: 48px; }
        .weather {
            display: flex;
            align-items: center;
            gap: 12px;
            padding: 0;
            margin-right: 17px;
            border: 0;
            background: none;
            color: inherit;
            font: inherit;
            font-size: 20px;
            white-space: pre;
        }
        .clock { width: 76px; margin: 0 26px 0 15px; text-align: center; font-size: 18px; line-height: 28px; }
        .pen { --w: 60px; }
        .notify { position: relative; --w: 36px; margin-right: 25px; }
        .count {
            position: absolute;
            left: 14px;
            top: 28px;
            width: 29px;
            height: 25px;
            border: 1px solid #8a8a88;
            border-radius: 15px;
            background: #3a3a39;
            font-size: 17px;
            font-weight: 600;
            line-height: 25px;
            text-align: center;
        }
        .desktop { width: 6px; height: 60px; border-left: 1px solid #8a8884; }
    </style>
    <div class="system">
        <icon-button icon="windows" label="Start"></icon-button>
        <icon-button icon="winSearch" label="Search"></icon-button>
        <icon-button icon="taskView" label="Task view"></icon-button>
    </div>
    <div class="apps">
        <div class="app more"><icon-button icon="explorer" label="File Explorer"></icon-button></div>
        <div class="app"><icon-button icon="chrome" label="Chrome"></icon-button></div>
        <div class="app"><icon-button icon="teams" label="Teams"></icon-button><span class="badge">9+</span></div>
        <div class="app more"><icon-button icon="outlook" label="Outlook"></icon-button></div>
        <div class="app"><icon-button icon="word" label="Word"></icon-button></div>
        <div class="app"><icon-button icon="excel" label="Excel"></icon-button></div>
        <div class="app active"><icon-button icon="acrobat" label="Acrobat"></icon-button></div>
    </div>
    <div class="tray">
        <button class="weather"><app-icon name="weather"></app-icon><span>62°F  Cloudy</span></button>
        <icon-button icon="trayUp" label="Show hidden icons"></icon-button>
        <icon-button icon="battery" label="Battery"></icon-button>
        <icon-button icon="network" label="Network"></icon-button>
        <icon-button icon="sound" label="Volume"></icon-button>
        <icon-button icon="onedrive" label="OneDrive"></icon-button>
        <icon-button class="pen" icon="pen" label="Windows Ink"></icon-button>
        <div class="clock"><div>1:20 PM</div><div>8/6/2021</div></div>
        <div class="notify"><icon-button icon="notify" label="Notifications"></icon-button><span class="count">26</span></div>
        <div class="desktop"></div>
    </div>
`);

defineView("acrobat-app", `
    <style>
        :host { display: flex; flex-direction: column; height: 100vh; }
        main { display: flex; flex: 1; min-height: 0; }
    </style>
    <title-bar></title-bar>
    <menu-bar></menu-bar>
    <tab-strip></tab-strip>
    <tool-bar></tool-bar>
    <main>
        <nav-rail></nav-rail>
        <pdf-page></pdf-page>
        <scroll-rail></scroll-rail>
        <tools-rail></tools-rail>
    </main>
    <task-bar></task-bar>
`);
</script>
</body>
</html>
